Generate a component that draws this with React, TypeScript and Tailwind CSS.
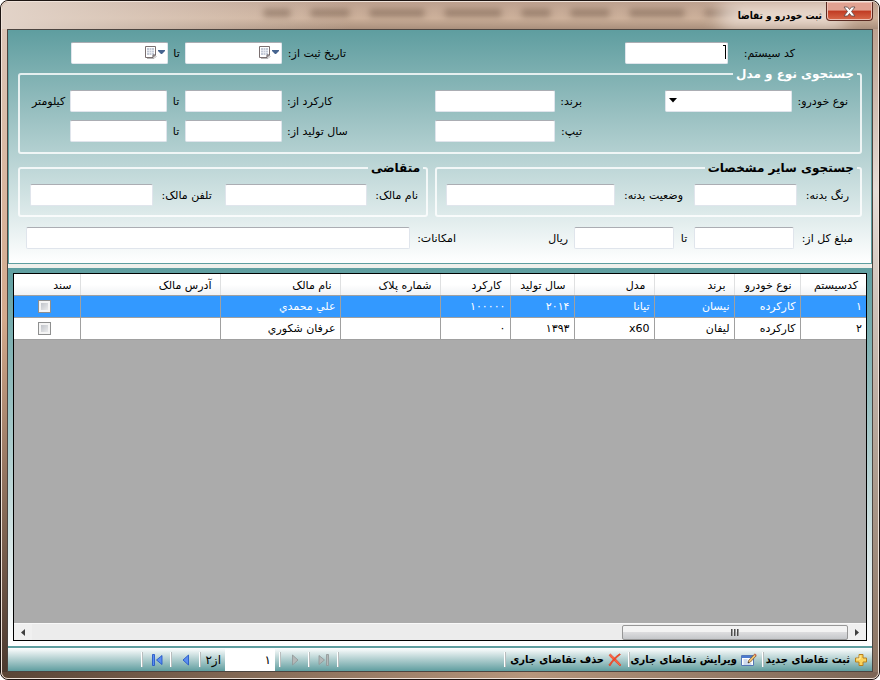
/*
 * Vehicle & request registration window (RTL)
 * Search form on top, result grid in the middle, record navigator at the bottom
 */

import { useState, type ReactNode } from "react";

const columns = [
  { key: "code", label: "کدسیستم", width: "w-[66px]" },
  { key: "type", label: "نوع خودرو", width: "w-[66px]" },
  { key: "brand", label: "برند", width: "w-[80px]" },
  { key: "model", label: "مدل", width: "w-[80px]" },
  { key: "year", label: "سال تولید", width: "w-[64px]" },
  { key: "mileage", label: "کارکرد", width: "w-[70px]" },
  { key: "plate", label: "شماره پلاک", width: "w-[100px]" },
  { key: "owner", label: "نام مالک", width: "w-[120px]" },
  { key: "address", label: "آدرس مالک", width: "" },
] as const;

const rows = [
  { code: "۱", type: "کارکرده", brand: "نیسان", model: "تیانا", year: "۲۰۱۴", mileage: "۱۰۰۰۰۰", plate: "", owner: "علي محمدي", address: "" },
  { code: "۲", type: "کارکرده", brand: "لیفان", model: "x60", year: "۱۳۹۳", mileage: "۰", plate: "", owner: "عرفان شکوري", address: "" },
];

// Window text seen through the glass title bar
const smudges = [
  "w-[36px]",
  "w-[56px]",
  "w-[40px]",
  "w-[30px]",
  "w-[58px]",
  "w-[56px]",
  "w-[40px]",
  "w-[28px]",
];

const boxStyle =
  "h-[22px] min-w-0 rounded-[2px] border border-[#e0e5ec] border-t-[#abadb3] bg-white";

function TextBox({ id, className = "" }: { id: string; className?: string }) {
  return <input id={id} type="text" className={`${boxStyle} px-1 outline-none ${className}`} />;
}

function CalendarIcon() {
  return (
    <svg width="21" height="14" viewBox="0 0 21 14">
      <path d="M2 12.5h7l2.500-2.500" stroke="#b5b5b5" fill="none" />
      <path d="M.5.5h10v8.500l-2.500 2.500H.5z" fill="#fff" stroke="#7a6f70" />
      <path d="M2 2h7v7H2z" fill="#c3c9d6" />
      <path d="M2 4.500h7M2 6.500h7M4.500 2v7M6.500 2v7" stroke="#eef0f5" strokeWidth=".7" />
      <path d="M8 11.500V9h2.500" stroke="#5f5658" fill="none" />
      <path d="M13 4h7v1l-3 3h-1l-3-3z" fill="#47648f" />
    </svg>
  );
}

function DateBox({ id }: { id: string }) {
  return (
    <div className={`${boxStyle} flex w-[97px] items-center`}>
      <button type="button" aria-label="تقویم" className="px-px">
        <CalendarIcon />
      </button>
      <input id={id} type="text" className="h-full min-w-0 flex-1 outline-none" />
    </div>
  );
}

function Group({ title, className = "", legend = "", children }: { title: string; className?: string; legend?: string; children: ReactNode }) {
  return (
    <fieldset className={`min-w-0 rounded-[3px] border-2 border-white/80 ${className}`}>
      <legend className={`mr-[3px] px-[3px] text-[12px] leading-4 font-bold ${legend}`}>{title}</legend>
      {children}
    </fieldset>
  );
}

function SearchForm() {
  return (
    <form className="border border-[#5f9ea0] bg-linear-to-b from-[#5f9ea0] to-white pb-[14px] [&_label]:pt-px">
      <div className="flex items-center pt-[11px] pr-[76px] pb-[2px] pl-[62px]">
        <label htmlFor="code" className="w-[67px]">کد سیستم:</label>
        <div className={`${boxStyle} flex w-[103px] pr-px`}>
          <svg width="3" height="16" viewBox="0 0 3 16" className="mt-px">
            <path d="M2 1h1v14H2zM0 1h3v1H0z" fill="#000" />
          </svg>
          <input id="code" type="text" className="min-w-0 flex-1 outline-none" />
        </div>
        <div className="flex-1" />
        <label htmlFor="date-from" className="w-[64px]">تاریخ ثبت از:</label>
        <DateBox id="date-from" />
        <label htmlFor="date-to" className="w-[17px] text-center">تا</label>
        <DateBox id="date-to" />
      </div>

      <Group title="جستجوی نوع و مدل" legend="text-white" className="mx-[9px] pb-[10px]">
        <div className="grid grid-cols-[56px_127px_1fr_27px_120px_1fr_70px_97px_18px_97px_38px] items-center gap-y-2 px-3 pt-2">
          <label htmlFor="type">نوع خودرو:</label>
          <div className="relative">
            <select id="type" className={`${boxStyle} block w-full appearance-none`} />
            <svg width="8" height="5" viewBox="0 0 8 5" className="pointer-events-none absolute top-2 left-1">
              <path d="M0 0h8L4 4.500z" fill="#000" />
            </svg>
          </div>
          <label htmlFor="brand" className="col-start-4">برند:</label>
          <TextBox id="brand" />
          <label htmlFor="km-from" className="col-start-7 pl-[5px] text-left">کارکرد از:</label>
          <TextBox id="km-from" />
          <label htmlFor="km-to" className="text-center">تا</label>
          <TextBox id="km-to" />
          <span className="pt-px text-left">کیلومتر</span>

          <label htmlFor="trim" className="col-start-4">تیپ:</label>
          <TextBox id="trim" />
          <label htmlFor="year-from" className="col-start-7 pl-[5px] text-left">سال تولید از:</label>
          <TextBox id="year-from" />
          <label htmlFor="year-to" className="text-center">تا</label>
          <TextBox id="year-to" />
        </div>
      </Group>

      <div className="mx-[9px] mt-[6px] flex gap-[7px]">
        <Group title="جستجوی سایر مشخصات" className="flex-[428] pb-[9px]">
          <div className="flex items-center pt-2 pr-[11px] pl-[9px]">
            <label htmlFor="color" className="w-[52px]">رنگ بدنه:</label>
            <TextBox id="color" className="w-[103px]" />
            <label htmlFor="body" className="mr-[11px] w-[68px]">وضعیت بدنه:</label>
            <TextBox id="body" className="flex-1" />
          </div>
        </Group>
        <Group title="متقاضی" className="flex-[411] pb-[9px]">
          <div className="flex items-center pt-2 pr-2 pl-[10px]">
            <label htmlFor="owner" className="w-[51px]">نام مالک:</label>
            <TextBox id="owner" className="flex-[143]" />
            <label htmlFor="phone" className="mr-[13px] w-[59px]">تلفن مالک:</label>
            <TextBox id="phone" className="flex-[122]" />
          </div>
        </Group>
      </div>

      <div className="mt-[10px] flex items-center pr-[18px] pl-[17px]">
        <label htmlFor="price-from" className="w-[59px]">مبلغ کل از:</label>
        <TextBox id="price-from" className="w-[100px]" />
        <label htmlFor="price-to" className="w-[20px] text-center">تا</label>
        <TextBox id="price-to" className="w-[100px]" />
        <span className="mr-[6px] w-[112px] pt-px">ریال</span>
        <label htmlFor="options" className="w-[46px]">امکانات:</label>
        <TextBox id="options" className="flex-1" />
      </div>
    </form>
  );
}

function ResultGrid() {
  const [selected, setSelected] = useState(0);

  return (
    <div className="flex flex-1 flex-col border border-black bg-[#ababab]">
      <table className="w-full table-fixed border-collapse">
        <thead>
          <tr className="h-[21px] bg-linear-to-b from-white from-50% to-[#f1f2f4]">
            {columns.map((col) => (
              <th key={col.key} className={`${col.width} overflow-hidden border-b border-l border-b-[#a0a0a0] border-l-[#dfe0e1] pt-[3px] pr-2 text-right font-normal whitespace-nowrap`}>
                {col.label}
              </th>
            ))}
            <th className="w-[66px] border-b border-b-[#a0a0a0] pt-[3px] pr-2 text-right font-normal">سند</th>
          </tr>
        </thead>
        <tbody>
          {rows.map((row, i) => (
            <tr
              key={row.code}
              onClick={() => setSelected(i)}
              className={`h-[22px] ${selected === i ? "bg-[#3399ff] text-white" : "bg-white text-black"}`}
            >
              {columns.map((col) => (
                <td key={col.key} className="border-b border-l border-[#a0a0a0] pt-px pr-1 whitespace-nowrap">
                  {row[col.key]}
                </td>
              ))}
              <td className="border-b border-[#a0a0a0] pr-1">
                <input
                  type="checkbox"
                  aria-label="سند"
                  className="mx-auto block size-[13px] appearance-none border border-[#8e8f8f] bg-linear-to-br from-[#b5b9c0] to-[#f6f6f6] shadow-[inset_0_0_0_2px_#f4f4f4] checked:from-[#3c5a99]"
                />
              </td>
            </tr>
          ))}
        </tbody>
      </table>
      <div className="flex-1" />
      {/* Horizontal scroll bar */}
      <div className="flex h-[17px] items-center border-t border-[#f8f8f8] bg-[#ececec]">
        <button type="button" aria-label="راست" className="flex h-full w-[18px] items-center justify-center bg-[#f0f0f0]">
          <svg width="4" height="7" viewBox="0 0 4 7"><path d="M0 0l4 3.500L0 7z" fill="#404040" /></svg>
        </button>
        <button
          type="button"
          aria-label="نوار پیمایش"
          className="flex h-[15px] w-[226px] items-center justify-center rounded-[2px] border border-[#979797] bg-linear-to-b from-[#f3f3f3] from-50% via-[#dcdcde] via-50% to-[#c5c7ca]"
        >
          <svg width="9" height="7" viewBox="0 0 9 7">
            <path d="M.5 0v7M3.500 0v7M6.500 0v7" stroke="#4d4d4d" />
            <path d="M1.500 0v7M4.500 0v7M7.500 0v7" stroke="#999" />
          </svg>
        </button>
        <div className="flex-1" />
        <button type="button" aria-label="چپ" className="flex h-full w-[18px] items-center justify-center bg-[#f0f0f0]">
          <svg width="4" height="7" viewBox="0 0 4 7"><path d="M4 0L0 3.500 4 7z" fill="#404040" /></svg>
        </button>
      </div>
    </div>
  );
}

function Separator() {
  return <div className="h-[15px] w-[2px] shrink-0 border-r border-l border-r-[#b9bdbd] border-l-white" />;
}

function NavButton({ label, disabled = false, last = false, flip = false }: { label: string; disabled?: boolean; last?: boolean; flip?: boolean }) {
  const fill = disabled ? "#b4b8b8" : "#5b8df0";
  const stroke = disabled ? "#8f9696" : "#1c4fc4";
  return (
    <button type="button" aria-label={label} disabled={disabled} className="flex w-[27px] items-center justify-center">
      <svg width="12" height="12" viewBox="0 0 12 12" className={flip ? "-scale-x-100" : ""}>
        {last ? (
          <>
            <path d="M1 1.500L6.500 6 1 10.500z" fill={fill} stroke={stroke} strokeWidth=".8" />
            <path d="M8.500.5h2v11h-2z" fill={fill} stroke={stroke} strokeWidth=".8" />
          </>
        ) : (
          <path d="M3.500 1L9 6 3.500 11z" fill={fill} stroke={stroke} strokeWidth=".8" />
        )}
      </svg>
    </button>
  );
}

// Narrower face for the bold captions of the title bar and the toolbar
const captionFont = "font-['DejaVu_Sans_Condensed','DejaVu_Sans',sans-serif] font-bold whitespace-nowrap";

function Toolbar() {
  return (
    <div className="flex h-[23px] items-center bg-linear-to-b from-white to-[#5f9ea0] pr-1 pl-[133px]">
      <button type="button" className={`flex w-[104px] items-center gap-1 text-[11px] ${captionFont}`}>
        <svg width="14" height="14" viewBox="0 0 14 14" className="shrink-0">
          <path d="M5 1.500h4V5h3.500v4H9v3.500H5V9H1.500V5H5z" fill="#fbd45c" stroke="#b9801c" />
          <path d="M6 2.500v3.500H2.500" stroke="#fff0b0" fill="none" />
        </svg>
        ثبت تقاضای جدید
      </button>
      <Separator />
      <button type="button" className={`mr-[5px] flex w-[127px] items-center gap-1 text-[11px] ${captionFont}`}>
        <svg width="16" height="14" viewBox="0 0 16 14" className="shrink-0">
          <path d="M.5 2.500h12v10H.5z" fill="#fff" stroke="#5578b8" />
          <path d="M1 3h11v2H1z" fill="#4b7bd0" />
          <path d="M2.500 7h4M2.500 9h5M2.500 11h8" stroke="#9db6dd" />
          <path d="M7 10l.8-2.800L13.500 1.200l1.700 1.600L9.500 9z" fill="#f0c270" stroke="#6b4b2a" strokeWidth=".7" />
          <path d="M13 1.500L14 .5l1.700 1.600-1 1.100z" fill="#c96a50" />
          <path d="M7 10l.4-1.300.9.8z" fill="#222" />
        </svg>
        ویرایش تقاضای جاری
      </button>
      <Separator />
      <button type="button" className={`mr-[6px] flex w-[116px] items-center gap-1 text-[11px] ${captionFont}`}>
        <svg width="14" height="14" viewBox="0 0 14 14" className="shrink-0">
          <path d="M1 2.200L2.500 1C5 3.500 9.500 7.500 13 12l-1 1C8.500 9.500 4 6 1 2.200z" fill="#ff6240" stroke="#d92f14" strokeWidth=".5" />
          <path d="M12.500 1.500C8.500 4.500 4.500 8.500 2 13L.8 12C3.500 8 7.500 3.500 11.500.8z" fill="#f4512f" stroke="#d92f14" strokeWidth=".5" />
        </svg>
        حذف تقاضای جاری
      </button>
      <Separator />
      <div className="flex-1" />
      <Separator />
      <NavButton label="آخرین" disabled last />
      <Separator />
      <NavButton label="بعدی" disabled />
      <Separator />
      <input type="text" aria-label="رکورد جاری" defaultValue="۱" className="mr-1 h-[22px] w-[50px] bg-white px-1 text-[12px] outline-none" />
      <span className="w-[24px] pr-1 text-[12px] whitespace-nowrap">از۲</span>
      <Separator />
      <NavButton label="قبلی" flip />
      <Separator />
      <NavButton label="اولین" last flip />
      <Separator />
    </div>
  );
}

function TitleBar() {
  return (
    <header className="relative flex h-[27px] items-start overflow-hidden rounded-t-[6px] bg-linear-to-b from-[#bda18f] via-[#cdb19b] via-60% to-[#a98f7c] pr-[5px]">
      <div className="absolute inset-0 bg-linear-to-r from-[#e2d3c8] via-transparent via-40% to-transparent" />
      <div className="absolute inset-y-0 right-[138px] flex items-start gap-[19px] pt-[7px] blur-[3px]">
        {smudges.map((w, i) => (
          <div key={i} className={`${w} h-[8px] rounded-full bg-[#6e5546]/50`} />
        ))}
      </div>
      <div className="absolute inset-y-0 right-[30px] w-[130px] rounded-full bg-[#f2e6dd]/80 blur-[9px]" />
      <button
        type="button"
        aria-label="بستن"
        className="relative flex h-[19px] w-[47px] items-center justify-center rounded-b-[4px] border border-t-0 border-[#5b2a22] bg-linear-to-b from-[#e0a191] from-45% via-[#c03a22] via-50% to-[#d8694a] shadow-[inset_0_0_0_1px_#ecc0b4]"
      >
        <svg width="13" height="11" viewBox="0 0 13 11">
          <path d="M1 1h3.500l2 2.500L8.500 1H12L8.500 5.500 12 10H8.500l-2-2.500-2 2.500H1l3.500-4.500z" fill="#fff" stroke="#5a4848" strokeWidth=".8" />
        </svg>
      </button>
      <h1 className={`relative mr-1 pt-1 text-[10px] leading-5 ${captionFont}`}>ثبت خودرو و تقاضا</h1>
    </header>
  );
}

export default function App() {
  return (
    <div
      dir="rtl"
      className="flex min-h-screen flex-col rounded-[8px] border border-[#1d1512] bg-[#a58a78] font-['DejaVu_Sans',Tahoma,sans-serif] text-[11px] leading-[14px] text-black"
    >
      <div className="flex flex-1 flex-col rounded-[7px] border border-[#efe3da]">
        <TitleBar />
        <div className="flex flex-1">
          <div className="w-[5px] bg-linear-to-b from-[#bda18f] via-[#e5dcd6] via-25% to-[#8a7361]" />
          <main className="flex min-w-0 flex-1 flex-col border border-[#4c4540] bg-[#5f9ea0]">
            <SearchForm />
            <div className="h-[4px] bg-[#f0f0ec]" />
            <section className="flex flex-1 flex-col bg-linear-to-b from-[#5f9ea0] to-white px-[5px] pt-[5px] pb-[5px]">
              <ResultGrid />
            </section>
            <div className="mt-[2px]">
              <Toolbar />
            </div>
          </main>
          <div className="w-[5px] bg-linear-to-b from-[#dcc5b6] via-[#d4aa8c] via-45% to-[#4b392e]" />
        </div>
        <div className="h-[6px] rounded-b-[6px] bg-linear-to-r from-[#5a4536] via-[#b6967c] via-60% to-[#7c6656]" />
      </div>
    </div>
  );
}
